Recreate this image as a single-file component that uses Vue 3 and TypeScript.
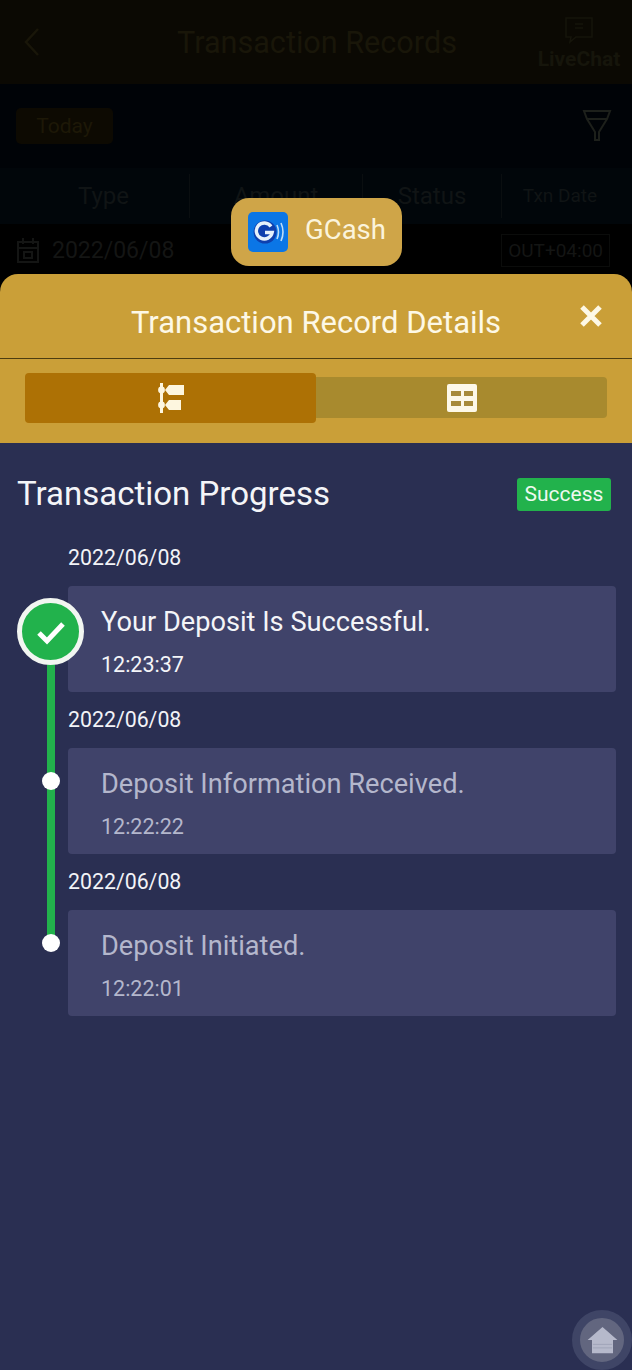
<template>
  <div class="screen">
    <!-- dimmed page behind the sheet -->
    <div class="page">
      <header class="top-bar">
        <svg class="back" viewBox="0 0 20 32" width="20" height="32">
          <path d="M16 3 4 16l12 13" fill="none" stroke="#191609" stroke-width="2.5" />
        </svg>
        <span class="top-title">Transaction Records</span>
        <div class="live-chat">
          <svg viewBox="0 0 30 30" width="32" height="30">
            <path d="M2 3h26v19H12l-6 5 1-5H2z" fill="none" stroke="#16150b" stroke-width="1.5" />
            <path d="M11 9h8M11 13h8" stroke="#16150b" stroke-width="1.5" />
          </svg>
          <span class="live-label">LiveChat</span>
        </div>
      </header>
      <div class="filter-row">
        <span class="today">Today</span>
        <svg viewBox="0 0 30 36" width="30" height="36">
          <path d="M2 3h26l-3 8H5zM5 11l8 13v8h4v-8l8-13" fill="none" stroke="#1d201b" stroke-width="2" />
        </svg>
      </div>
      <div class="table-head">
        <span class="col type">Type</span>
        <span class="col amount">Amount</span>
        <span class="col status">Status</span>
        <span class="col txn">Txn Date</span>
      </div>
      <div class="table-row">
        <svg viewBox="0 0 24 28" width="26" height="28">
          <path d="M2 6h20v20H2zM2 12h20M7 2v6M17 2v6M8 16h8v6H8z" fill="none" stroke="#141514" stroke-width="2" />
        </svg>
        <span class="row-date">2022/06/08</span>
        <span class="row-code">OUT+04:00</span>
      </div>
    </div>

    <div class="toast">
      <svg class="gcash" viewBox="0 0 40 40" width="40" height="40">
        <rect width="40" height="40" rx="5" fill="#0b76e6" />
        <circle cx="17" cy="20" r="11.5" fill="#0e3fae" />
        <path d="M23 14.5a8 8 0 1 0 1.2 6H17" fill="none" stroke="#e6f1fb" stroke-width="3.4" />
        <path d="M29 13q3 7 0 14M33 11q4 9 0 18" fill="none" stroke="#bcdcf8" stroke-width="1.6" />
      </svg>
      <span class="toast-label">GCash</span>
    </div>

    <section class="sheet">
      <div class="sheet-head">
        <h1>Transaction Record Details</h1>
        <svg class="close" viewBox="0 0 24 24" width="24" height="24">
          <path d="M3 3l18 18M21 3 3 21" stroke="#fdf8e6" stroke-width="5" />
        </svg>
      </div>
      <div class="tabs">
        <button class="tab active" type="button">
          <svg viewBox="0 0 28 32" width="28" height="32">
            <path d="M3 1h3v30H3z" fill="#fdf6df" />
            <circle cx="4.5" cy="8" r="3.4" fill="#fdf6df" />
            <circle cx="4.5" cy="23" r="3.4" fill="#fdf6df" />
            <path d="M8 8l4-5h15v10H12zM8 23l4-5h12v10H12z" fill="#fdf6df" />
          </svg>
        </button>
        <button class="tab" type="button">
          <svg viewBox="0 0 30 30" width="30" height="30">
            <rect width="30" height="28" y="1" rx="2" fill="#fdf8e8" />
            <path d="M4 8h10v5H4zM17 8h9v5h-9zM4 18h10v5H4zM17 18h9v5h-9z" fill="#a78a3a" />
          </svg>
        </button>
      </div>
      <div class="body">
        <div class="progress-head">
          <h2>Transaction Progress</h2>
          <span class="badge">Success</span>
        </div>
        <ol class="timeline">
          <li v-for="(step, i) in steps" :key="step.title" class="step" :class="{ current: i === 0 }">
            <span v-if="i === 0" class="rail"></span>
            <span v-if="i === 0" class="node-done">
              <svg viewBox="0 0 32 32" width="32" height="32">
                <path d="M4 17l8 8L28 8" fill="none" stroke="#fff" stroke-width="5" />
              </svg>
            </span>
            <span v-else class="node"></span>
            <div class="date">{{ step.date }}</div>
            <div class="card">
              <div class="card-title">{{ step.title }}</div>
              <div class="card-time">{{ step.time }}</div>
            </div>
          </li>
        </ol>
      </div>
      <div class="home">
        <svg viewBox="0 0 36 32" width="33" height="28">
          <path d="M18 1 35 16h-5v15H6V16H1z" fill="#b6b9cb" />
          <path d="M7 21h22M7 25h22" stroke="#9da1b6" stroke-width="1" />
        </svg>
      </div>
    </section>
  </div>
</template>

<script setup lang="ts">
interface Step {
  date: string
  title: string
  time: string
}

const steps: Step[] = [
  { date: '2022/06/08', title: 'Your Deposit Is Successful.', time: '12:23:37' },
  { date: '2022/06/08', title: 'Deposit Information Received.', time: '12:22:22' },
  { date: '2022/06/08', title: 'Deposit Initiated.', time: '12:22:01' },
]
</script>

<style>
html,
body {
  margin: 0;
  background: #000;
}
</style>

<style scoped>
.screen {
  position: relative;
  width: 632px;
  height: 1370px;
  overflow: hidden;
  font-family: Roboto, 'Liberation Sans', sans-serif;
  background: #000;
}

.top-bar {
  height: 84px;
  background: #0b0903;
  display: flex;
  align-items: center;
  padding: 0 0 0 22px;
  box-sizing: border-box;
  color: #191609;
}
.top-title {
  font-size: 30.6px;
  margin-left: 135px;
  flex: 1;
  white-space: nowrap;
}
.live-chat {
  width: 96px;
  padding-right: 10px;
  padding-top: 2px;
  box-sizing: border-box;
  display: flex;
  flex-direction: column;
  align-items: center;
  font-size: 21px;
  font-weight: 700;
  white-space: nowrap;
  color: #16150b;
}
.live-label {
  margin-top: 2px;
}

.filter-row {
  height: 84px;
  background: #000307;
  display: flex;
  align-items: center;
  justify-content: space-between;
  padding: 0 20px 0 16px;
  box-sizing: border-box;
}
.today {
  width: 97px;
  height: 36px;
  line-height: 36px;
  text-align: center;
  border-radius: 5px;
  background: #0d0a02;
  color: #1d1807;
  font-size: 21px;
}

.table-head {
  height: 56px;
  background: #01060a;
  display: flex;
  align-items: center;
  color: #101415;
  font-size: 24px;
}
.col {
  height: 44px;
  line-height: 44px;
  text-align: center;
  border-right: 1px solid #0a0e10;
  box-sizing: border-box;
}
.type { width: 190px; padding-left: 18px; }
.amount { width: 173px; }
.status { width: 139px; }
.txn { width: 130px; border-right: none; font-size: 19px; padding-right: 14px; }

.table-row {
  display: flex;
  align-items: center;
  height: 52px;
  padding: 0 22px 0 15px;
  color: #141514;
  font-size: 23px;
}
.row-date {
  margin-left: 11px;
  flex: 1;
}
.row-code {
  font-size: 19px;
  padding: 4px 6px;
  border: 1px solid #0b0c0b;
}

.toast {
  position: absolute;
  left: 231px;
  top: 198px;
  width: 171px;
  height: 68px;
  box-sizing: border-box;
  padding-left: 17px;
  display: flex;
  align-items: center;
  gap: 17px;
  border-radius: 18px;
  background: #cfa548;
  color: #fbf4dc;
  font-size: 27.5px;
}
.toast-label {
  margin-bottom: 5px;
}

.sheet {
  position: absolute;
  left: 0;
  right: 0;
  top: 274px;
  bottom: 0;
  display: flex;
  flex-direction: column;
  border-radius: 18px 18px 0 0;
  overflow: hidden;
  background: #ca9f38;
}
.sheet-head {
  position: relative;
  height: 85px;
  flex: none;
  box-sizing: border-box;
  padding-top: 12px;
  display: flex;
  align-items: center;
  justify-content: center;
  border-bottom: 1px solid #4d3d10;
}
.sheet-head h1 {
  margin: 0;
  font-size: 31px;
  font-weight: 400;
  color: #fdf8e6;
}
.close {
  position: absolute;
  right: 29px;
  top: 30px;
}

.tabs {
  height: 84px;
  flex: none;
  box-sizing: border-box;
  padding: 0 25px 7px;
  display: flex;
  align-items: center;
}
.tab {
  flex: 1;
  height: 41px;
  padding: 0;
  border: none;
  border-radius: 0 4px 4px 0;
  background: #a88a2e;
  display: flex;
  align-items: center;
  justify-content: center;
}
.tab.active {
  height: 50px;
  border-radius: 4px;
  background: #ad7105;
}

.body {
  flex: 1;
  background: #2a2f52;
  padding: 33px 16px 0 17px;
}
.progress-head {
  display: flex;
  align-items: center;
  justify-content: space-between;
  height: 34px;
}
.progress-head h2 {
  margin: 0;
  font-size: 33px;
  font-weight: 400;
  color: #f4f5f8;
}
.badge {
  margin-right: 5px;
  margin-top: 3px;
  width: 94px;
  height: 33px;
  line-height: 33px;
  text-align: center;
  border-radius: 3px;
  background: #22b24c;
  color: #eef9f0;
  font-size: 21px;
}

.timeline {
  list-style: none;
  margin: 33px 0 0;
  padding: 0 0 0 51px;
}
.step {
  position: relative;
  height: 162px;
}
.date {
  height: 29px;
  line-height: 29px;
  font-size: 21.3px;
  color: #f2f3f7;
  margin-bottom: 14px;
}
.card {
  height: 106px;
  box-sizing: border-box;
  padding: 19px 0 0 33px;
  border-radius: 4px;
  background: #40436a;
}
.card-title {
  font-size: 27.2px;
  line-height: 34px;
  color: #b4b7cc;
}
.card-time {
  margin-top: 11px;
  font-size: 21.5px;
  line-height: 30px;
  color: #b4b7cc;
}
.current .card-title,
.current .card-time {
  color: #f4f5f8;
}

.rail {
  position: absolute;
  left: -21px;
  top: 100px;
  width: 8px;
  height: 300px;
  background: #22b24c;
}
.node {
  position: absolute;
  left: -26px;
  top: 67px;
  width: 18px;
  height: 18px;
  border-radius: 50%;
  background: #fff;
}
.node-done {
  position: absolute;
  left: -51px;
  top: 55px;
  width: 67px;
  height: 67px;
  box-sizing: border-box;
  border: 5px solid #f2f6f1;
  border-radius: 50%;
  background: #22b24c;
  display: flex;
  align-items: center;
  justify-content: center;
}

.home {
  position: absolute;
  right: 0;
  bottom: 0;
  width: 60px;
  height: 60px;
  box-sizing: border-box;
  border: 8px solid #3f4566;
  border-radius: 50%;
  background: #62667f;
  display: flex;
  align-items: center;
  justify-content: center;
}
</style>
